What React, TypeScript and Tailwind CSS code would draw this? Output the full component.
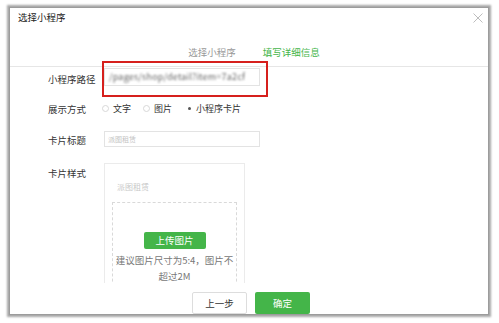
export default function App() {
  return (
    <div
      className="w-[499px] h-[323px] bg-white pl-[10px] pt-[8px] overflow-hidden"
      style={{ fontFamily: '"Noto Sans CJK SC", "Noto Sans", sans-serif' }}
    >
      <div className="relative w-[478px] h-[306px] bg-white flex flex-col overflow-hidden shadow-[0_0_0_1px_#9c9c9c,0_0_2px_3px_rgba(0,0,0,0.35)]">
        {/* header */}
        <div className="h-[18px] flex items-center justify-between pl-[8px] pr-[5px]">
          <span className="text-[9.5px] leading-[12px] text-[#222]">选择小程序</span>
          <svg width="10" height="10" viewBox="0 0 10 10" className="mt-[2px]">
            <path d="M0.5 0.5 L9.5 9.5 M9.5 0.5 L0.5 9.5" stroke="#b5b5b5" strokeWidth="0.9" />
          </svg>
        </div>

        {/* steps */}
        <div className="h-[42px] border-b border-[#e6e6e6] flex justify-center gap-[27px] pt-[20px] pl-[10px]">
          <span className="text-[9.5px] leading-[12px] text-[#999]">选择小程序</span>
          <span className="text-[9.5px] leading-[12px] text-[#44b549]">填写详细信息</span>
        </div>

        {/* body */}
        <div className="h-[222px] overflow-hidden pl-[38px]">
          <div className="mt-[1px] flex items-center h-[18px]">
            <span className="w-[56px] text-[9.5px] leading-[12px] text-[#333] mt-[4px]">小程序路径</span>
            <div className="w-[156px] h-[18px] border border-[#e3e3e3] flex items-center px-[4px]">
              <div className="text-[9px] text-[#666] blur-[0.8px] whitespace-nowrap tracking-[0.2px]">
                /pages/shop/detail?item=7a2cf
              </div>
            </div>
          </div>

          <div className="mt-[16px] flex items-center h-[14px]">
            <span className="w-[54px] text-[9.5px] leading-[12px] text-[#333]">展示方式</span>
            <div className="flex items-center text-[9px] leading-[12px] text-[#333]">
              <span className="w-[7px] h-[7px] rounded-full border border-[#d8d8d8]" />
              <span className="ml-[4px]">文字</span>
              <span className="ml-[12px] w-[7px] h-[7px] rounded-full border border-[#d8d8d8]" />
              <span className="ml-[4px]">图片</span>
              <span className="ml-[14px] w-[6px] h-[6px] rounded-full flex items-center justify-center">
                <span className="w-[3px] h-[3px] rounded-full bg-[#555]" />
              </span>
              <span className="ml-[4px]">小程序卡片</span>
            </div>
          </div>

          <div className="mt-[15px] flex items-center h-[16px]">
            <span className="w-[56px] text-[9.5px] leading-[12px] text-[#333] mt-[3px]">卡片标题</span>
            <div className="w-[156px] h-[16px] border border-[#e3e3e3] flex items-center px-[3px]">
              <span className="text-[7px] text-[#c4c4c4]">派图租赁</span>
            </div>
          </div>

          <div className="mt-[16px] flex items-start">
            <span className="w-[56px] text-[9.5px] leading-[12px] text-[#333] mt-[4px]">卡片样式</span>
            <div className="w-[141px] h-[140px] border border-[#ebebeb] px-[7px]">
              <div className="pt-[17px] pl-[5px] text-[8px] leading-[12px] text-[#c8c8c8]">派图租赁</div>
              <div className="mt-[9px] h-[100px] border border-dashed border-[#d9d9d9] flex flex-col items-center pt-[29px]">
                <div className="w-[62px] h-[17px] bg-[#44b549] rounded-[2px] flex items-center justify-center text-white text-[9.5px]">
                  上传图片
                </div>
                <div className="mt-[3px] text-center text-[9.5px] leading-[16px] text-[#777] px-[2px]">
                  建议图片尺寸为5:4，图片不超过2M
                </div>
              </div>
            </div>
          </div>
        </div>

        {/* footer */}
        <div className="flex justify-center gap-[8px] pt-[9px] pl-[4px]">
          <div className="w-[55px] h-[22px] border border-[#ddd] rounded-[2px] bg-white flex items-center justify-center text-[9.5px] text-[#333]">
            上一步
          </div>
          <div className="w-[55px] h-[22px] rounded-[2px] bg-[#44b549] flex items-center justify-center text-[9.5px] text-white">
            确定
          </div>
        </div>

        {/* annotation */}
        <div className="absolute left-[92px] top-[53px] w-[166px] h-[36px] border-2 border-[#d6201d]" />
      </div>
    </div>
  );
}
